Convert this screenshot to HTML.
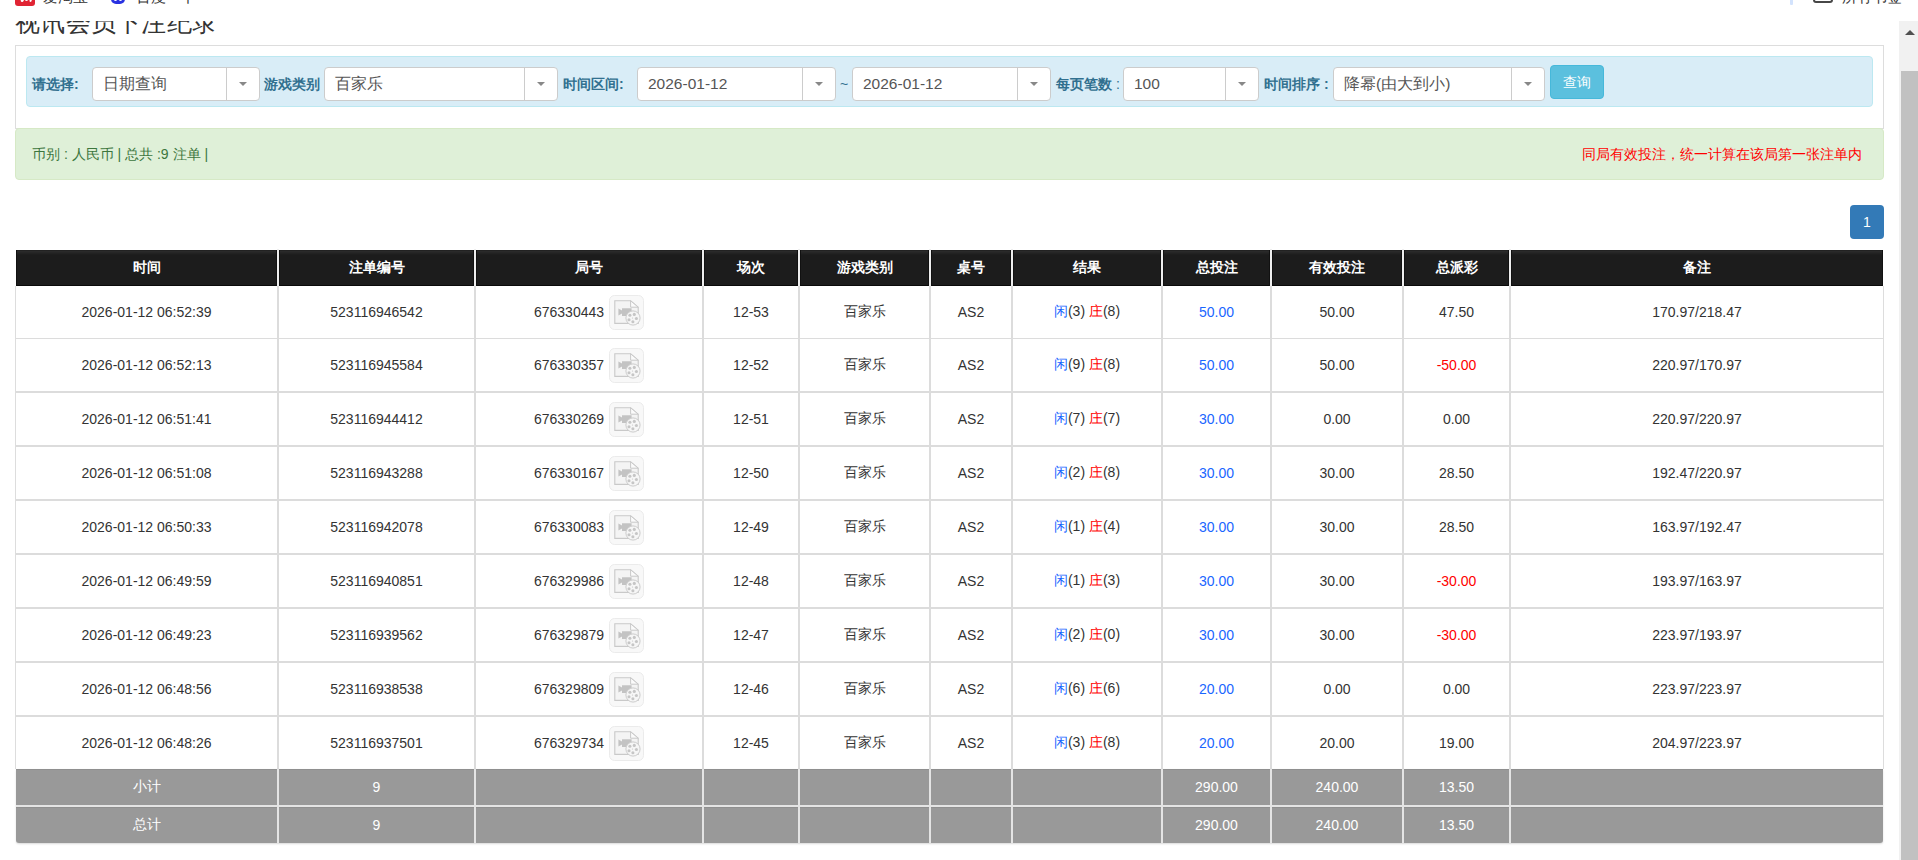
<!DOCTYPE html><html><head><meta charset="utf-8"><style>
html,body{margin:0;padding:0;width:1918px;height:860px;overflow:hidden;background:#fff;font-family:"Liberation Sans", sans-serif;color:#333;}
.a{position:absolute;}
.c{position:absolute;display:flex;align-items:center;justify-content:center;font-size:14px;white-space:nowrap;}
.hd{background:linear-gradient(#1e1e1e 0px,#2a2a2a 1.5px,#1c1c1c 5px);color:#fff;font-weight:bold;box-sizing:border-box;border-left:1px solid #111;border-right:1px solid #111;border-bottom:1px solid #0a0a0a;padding-top:1px;}
.gr{background:#999;color:#fff;box-shadow:inset 0 1px 0 #8f8f8f;}
.sel{position:absolute;background:#fff;border:1px solid #ccc;border-radius:4px;box-sizing:border-box;}
.sel .t{position:absolute;left:10px;top:0;bottom:0;display:flex;align-items:center;font-size:15.5px;color:#555;white-space:nowrap;}
.sel .s{position:absolute;top:0;bottom:0;width:1px;background:#ccc;}
.sel .ar{position:absolute;width:0;height:0;border-left:4px solid transparent;border-right:4px solid transparent;border-top:4px solid #888;}
.lb{position:absolute;font-size:14px;font-weight:bold;color:#31708f;white-space:nowrap;line-height:16px;}
.bl{color:#1a66ff;} .rd{color:#ff0000;}

</style></head><body>
<div class="a" style="left:0;top:0;width:1918px;height:21px;overflow:hidden;background:#fff;">
<div class="a" style="left:15px;top:-14px;width:20px;height:20px;background:#e02433;border-radius:3px;"></div>
<div class="a" style="left:21px;top:-3px;width:3px;height:5px;background:#fff;border-radius:2px;transform:rotate(15deg)"></div>
<div class="a" style="left:25px;top:-2px;width:3px;height:3px;background:#fff;border-radius:2px;"></div>
<div class="a" style="left:30px;top:-3px;width:2px;height:5px;background:#fff;border-radius:2px;transform:rotate(20deg)"></div>
<div class="a" style="left:43px;top:-11px;font-size:15px;color:#333;line-height:16px;white-space:nowrap;">爱淘宝</div>
<div class="a" style="left:111px;top:-12px;width:14px;height:16px;background:#2932e1;border-radius:5px;"></div>
<div class="a" style="left:114px;top:-2px;width:3px;height:3px;background:#fff;border-radius:2px;"></div>
<div class="a" style="left:119px;top:-2px;width:3px;height:3px;background:#fff;border-radius:2px;"></div>
<div class="a" style="left:136px;top:-11px;font-size:15px;color:#333;line-height:16px;white-space:nowrap;">百度一下</div>
<div class="a" style="left:1790px;top:-10px;width:3px;height:15px;background:#d3e3fd;border-radius:1px;"></div>
<div class="a" style="left:1813px;top:-15px;width:16px;height:14px;border:2.5px solid #474747;border-radius:3px;"></div>
<div class="a" style="left:1842px;top:-11px;font-size:15px;color:#333;line-height:16px;white-space:nowrap;">所有书签</div>
</div>
<div class="a" style="left:0;top:21px;width:1899px;height:839px;overflow:hidden;">
<div class="a" style="left:15px;top:-14px;font-size:25px;line-height:30px;letter-spacing:0.3px;color:#333;white-space:nowrap;">视讯会员下注纪录</div>
<div class="a" style="left:15px;top:24px;width:1869px;height:84px;border:1px solid #ddd;box-sizing:border-box;background:#fff;"></div>
<div class="a" style="left:26px;top:35px;width:1847px;height:51px;border:1px solid #bce8f1;box-sizing:border-box;background:#d9edf7;border-radius:4px;"></div>
<div class="lb" style="left:32px;top:55px;">请选择:</div>
<div class="sel" style="left:92px;top:46px;width:168px;height:34px;"><div class="t">日期查询</div><div class="s" style="left:133px"></div><div class="ar" style="left:146px;top:14px"></div></div>
<div class="lb" style="left:264px;top:55px;">游戏类别</div>
<div class="sel" style="left:324px;top:46px;width:234px;height:34px;"><div class="t">百家乐</div><div class="s" style="left:199px"></div><div class="ar" style="left:212px;top:14px"></div></div>
<div class="lb" style="left:563px;top:55px;">时间区间:</div>
<div class="sel" style="left:637px;top:46px;width:199px;height:34px;"><div class="t">2026-01-12</div><div class="s" style="left:164px"></div><div class="ar" style="left:177px;top:14px"></div></div>
<div class="a" style="left:840px;top:55px;font-size:14px;color:#31708f;line-height:16px;">~</div>
<div class="sel" style="left:852px;top:46px;width:199px;height:34px;"><div class="t">2026-01-12</div><div class="s" style="left:164px"></div><div class="ar" style="left:177px;top:14px"></div></div>
<div class="lb" style="left:1056px;top:55px;">每页笔数 <span style='font-weight:normal'>:</span></div>
<div class="sel" style="left:1123px;top:46px;width:136px;height:34px;"><div class="t">100</div><div class="s" style="left:101px"></div><div class="ar" style="left:114px;top:14px"></div></div>
<div class="lb" style="left:1264px;top:55px;">时间排序 :</div>
<div class="sel" style="left:1333px;top:46px;width:212px;height:34px;"><div class="t">降幂(由大到小)</div><div class="s" style="left:177px"></div><div class="ar" style="left:190px;top:14px"></div></div>
<div class="a" style="left:1550px;top:44px;width:54px;height:34px;background:#5bc0de;border:1px solid #46b8da;box-sizing:border-box;border-radius:4px;color:#fff;font-size:14px;display:flex;align-items:center;justify-content:center;padding-top:2px;">查询</div>
<div class="a" style="left:15px;top:107px;width:1869px;height:52px;border:1px solid #d6e9c6;box-sizing:border-box;background:#dff0d8;border-radius:4px;"></div>
<div class="a" style="left:32px;top:125px;font-size:14px;line-height:16px;color:#3c763d;white-space:nowrap;">币别 : 人民币 | 总共 :9 注单 |</div>
<div class="a" style="right:37px;top:125px;font-size:14px;line-height:16px;color:#ff0000;white-space:nowrap;">同局有效投注，统一计算在该局第一张注单内</div>
<div class="a" style="left:1850px;top:184px;width:34px;height:34px;background:#337ab7;border-radius:4px;color:#fff;font-size:14px;display:flex;align-items:center;justify-content:center;">1</div>
<div class="a" style="left:16px;top:229px;width:1867px;height:36px;background:#1c1c1c;border-radius:3px 3px 0 0;"></div>
<div class="c hd" style="left:16px;top:229px;width:261px;height:36px;">时间</div>
<div class="c hd" style="left:279px;top:229px;width:195px;height:36px;">注单编号</div>
<div class="c hd" style="left:476px;top:229px;width:226px;height:36px;">局号</div>
<div class="c hd" style="left:704px;top:229px;width:94px;height:36px;">场次</div>
<div class="c hd" style="left:800px;top:229px;width:129px;height:36px;">游戏类别</div>
<div class="c hd" style="left:931px;top:229px;width:80px;height:36px;">桌号</div>
<div class="c hd" style="left:1013px;top:229px;width:148px;height:36px;">结果</div>
<div class="c hd" style="left:1163px;top:229px;width:107px;height:36px;">总投注</div>
<div class="c hd" style="left:1272px;top:229px;width:130px;height:36px;">有效投注</div>
<div class="c hd" style="left:1404px;top:229px;width:105px;height:36px;">总派彩</div>
<div class="c hd" style="left:1511px;top:229px;width:372px;height:36px;">备注</div>
<div class="a" style="left:277px;top:228px;width:2px;height:37px;background:#eeeeee;"></div>
<div class="a" style="left:474px;top:228px;width:2px;height:37px;background:#eeeeee;"></div>
<div class="a" style="left:702px;top:228px;width:2px;height:37px;background:#eeeeee;"></div>
<div class="a" style="left:798px;top:228px;width:2px;height:37px;background:#eeeeee;"></div>
<div class="a" style="left:929px;top:228px;width:2px;height:37px;background:#eeeeee;"></div>
<div class="a" style="left:1011px;top:228px;width:2px;height:37px;background:#eeeeee;"></div>
<div class="a" style="left:1161px;top:228px;width:2px;height:37px;background:#eeeeee;"></div>
<div class="a" style="left:1270px;top:228px;width:2px;height:37px;background:#eeeeee;"></div>
<div class="a" style="left:1402px;top:228px;width:2px;height:37px;background:#eeeeee;"></div>
<div class="a" style="left:1509px;top:228px;width:2px;height:37px;background:#eeeeee;"></div>
<div class="a" style="left:15px;top:265px;width:1px;height:483px;background:#ddd;"></div>
<div class="a" style="left:1883px;top:265px;width:1px;height:483px;background:#ddd;"></div>
<div class="a" style="left:277px;top:265px;width:2px;height:483px;background:#dcdcdc;"></div>
<div class="a" style="left:474px;top:265px;width:2px;height:483px;background:#dcdcdc;"></div>
<div class="a" style="left:702px;top:265px;width:2px;height:483px;background:#dcdcdc;"></div>
<div class="a" style="left:798px;top:265px;width:2px;height:483px;background:#dcdcdc;"></div>
<div class="a" style="left:929px;top:265px;width:2px;height:483px;background:#dcdcdc;"></div>
<div class="a" style="left:1011px;top:265px;width:2px;height:483px;background:#dcdcdc;"></div>
<div class="a" style="left:1161px;top:265px;width:2px;height:483px;background:#dcdcdc;"></div>
<div class="a" style="left:1270px;top:265px;width:2px;height:483px;background:#dcdcdc;"></div>
<div class="a" style="left:1402px;top:265px;width:2px;height:483px;background:#dcdcdc;"></div>
<div class="a" style="left:1509px;top:265px;width:2px;height:483px;background:#dcdcdc;"></div>
<div class="a" style="left:16px;top:317px;width:1867px;height:1px;background:#dcdcdc;"></div>
<div class="a" style="left:16px;top:370px;width:1867px;height:2px;background:#dcdcdc;"></div>
<div class="a" style="left:16px;top:424px;width:1867px;height:2px;background:#dcdcdc;"></div>
<div class="a" style="left:16px;top:478px;width:1867px;height:2px;background:#dcdcdc;"></div>
<div class="a" style="left:16px;top:532px;width:1867px;height:2px;background:#dcdcdc;"></div>
<div class="a" style="left:16px;top:586px;width:1867px;height:2px;background:#dcdcdc;"></div>
<div class="a" style="left:16px;top:640px;width:1867px;height:2px;background:#dcdcdc;"></div>
<div class="a" style="left:16px;top:694px;width:1867px;height:2px;background:#dcdcdc;"></div>
<div class="c" style="left:16px;top:265px;width:261px;height:52px;"><span>2026-01-12 06:52:39</span></div>
<div class="c" style="left:279px;top:265px;width:195px;height:52px;"><span>523116946542</span></div>
<div class="c" style="left:476px;top:265px;width:226px;height:52px;"><span><span style="position:relative;top:1px">676330443</span><span style="display:inline-block;width:5px"></span><svg width="35" height="35" viewBox="0 0 35 35" style="vertical-align:middle"><rect x="0.5" y="0.5" width="34" height="34" rx="5" fill="#f8f8f8" stroke="#ebebeb"/><path d="M5.8 5.8 H21.6 L29.2 12.2 V28.4 H5.8 Z" fill="#f4f4f4" stroke="#c9c9c9" stroke-width="1.1"/><path d="M21.6 5.8 V12.2 H29.2 Z" fill="#fbfbfb" stroke="#c9c9c9" stroke-width="1"/><path d="M9.4 13.6 L13 15.6 V13.3 H22.6 V20.9 H13 V18.6 L9.4 20.6 Z" fill="#c3c3c3"/><circle cx="24" cy="23" r="7.1" fill="#f6f6f6" stroke="#cdcdcd" stroke-width="1"/><circle cx="20.9" cy="20.3" r="1.55" fill="#c6c6c6"/><circle cx="25.3" cy="19.4" r="1.55" fill="#c6c6c6"/><circle cx="27.4" cy="23.5" r="1.55" fill="#c6c6c6"/><circle cx="23.9" cy="26.8" r="1.55" fill="#c6c6c6"/><circle cx="20" cy="24.8" r="1.55" fill="#c6c6c6"/><circle cx="23.5" cy="23" r="0.6" fill="#c6c6c6"/></svg></span></div>
<div class="c" style="left:704px;top:265px;width:94px;height:52px;"><span>12-53</span></div>
<div class="c" style="left:800px;top:265px;width:129px;height:52px;"><span>百家乐</span></div>
<div class="c" style="left:931px;top:265px;width:80px;height:52px;"><span>AS2</span></div>
<div class="c" style="left:1013px;top:265px;width:148px;height:52px;"><span><span class="bl">闲</span>(3) <span class="rd">庄</span>(8)</span></div>
<div class="c" style="left:1163px;top:265px;width:107px;height:52px;"><span><span class="bl">50.00</span></span></div>
<div class="c" style="left:1272px;top:265px;width:130px;height:52px;"><span>50.00</span></div>
<div class="c" style="left:1404px;top:265px;width:105px;height:52px;"><span>47.50</span></div>
<div class="c" style="left:1511px;top:265px;width:372px;height:52px;"><span>170.97/218.47</span></div>
<div class="c" style="left:16px;top:318px;width:261px;height:52px;"><span>2026-01-12 06:52:13</span></div>
<div class="c" style="left:279px;top:318px;width:195px;height:52px;"><span>523116945584</span></div>
<div class="c" style="left:476px;top:318px;width:226px;height:52px;"><span><span style="position:relative;top:1px">676330357</span><span style="display:inline-block;width:5px"></span><svg width="35" height="35" viewBox="0 0 35 35" style="vertical-align:middle"><rect x="0.5" y="0.5" width="34" height="34" rx="5" fill="#f8f8f8" stroke="#ebebeb"/><path d="M5.8 5.8 H21.6 L29.2 12.2 V28.4 H5.8 Z" fill="#f4f4f4" stroke="#c9c9c9" stroke-width="1.1"/><path d="M21.6 5.8 V12.2 H29.2 Z" fill="#fbfbfb" stroke="#c9c9c9" stroke-width="1"/><path d="M9.4 13.6 L13 15.6 V13.3 H22.6 V20.9 H13 V18.6 L9.4 20.6 Z" fill="#c3c3c3"/><circle cx="24" cy="23" r="7.1" fill="#f6f6f6" stroke="#cdcdcd" stroke-width="1"/><circle cx="20.9" cy="20.3" r="1.55" fill="#c6c6c6"/><circle cx="25.3" cy="19.4" r="1.55" fill="#c6c6c6"/><circle cx="27.4" cy="23.5" r="1.55" fill="#c6c6c6"/><circle cx="23.9" cy="26.8" r="1.55" fill="#c6c6c6"/><circle cx="20" cy="24.8" r="1.55" fill="#c6c6c6"/><circle cx="23.5" cy="23" r="0.6" fill="#c6c6c6"/></svg></span></div>
<div class="c" style="left:704px;top:318px;width:94px;height:52px;"><span>12-52</span></div>
<div class="c" style="left:800px;top:318px;width:129px;height:52px;"><span>百家乐</span></div>
<div class="c" style="left:931px;top:318px;width:80px;height:52px;"><span>AS2</span></div>
<div class="c" style="left:1013px;top:318px;width:148px;height:52px;"><span><span class="bl">闲</span>(9) <span class="rd">庄</span>(8)</span></div>
<div class="c" style="left:1163px;top:318px;width:107px;height:52px;"><span><span class="bl">50.00</span></span></div>
<div class="c" style="left:1272px;top:318px;width:130px;height:52px;"><span>50.00</span></div>
<div class="c" style="left:1404px;top:318px;width:105px;height:52px;"><span><span class="rd">-50.00</span></span></div>
<div class="c" style="left:1511px;top:318px;width:372px;height:52px;"><span>220.97/170.97</span></div>
<div class="c" style="left:16px;top:372px;width:261px;height:52px;"><span>2026-01-12 06:51:41</span></div>
<div class="c" style="left:279px;top:372px;width:195px;height:52px;"><span>523116944412</span></div>
<div class="c" style="left:476px;top:372px;width:226px;height:52px;"><span><span style="position:relative;top:1px">676330269</span><span style="display:inline-block;width:5px"></span><svg width="35" height="35" viewBox="0 0 35 35" style="vertical-align:middle"><rect x="0.5" y="0.5" width="34" height="34" rx="5" fill="#f8f8f8" stroke="#ebebeb"/><path d="M5.8 5.8 H21.6 L29.2 12.2 V28.4 H5.8 Z" fill="#f4f4f4" stroke="#c9c9c9" stroke-width="1.1"/><path d="M21.6 5.8 V12.2 H29.2 Z" fill="#fbfbfb" stroke="#c9c9c9" stroke-width="1"/><path d="M9.4 13.6 L13 15.6 V13.3 H22.6 V20.9 H13 V18.6 L9.4 20.6 Z" fill="#c3c3c3"/><circle cx="24" cy="23" r="7.1" fill="#f6f6f6" stroke="#cdcdcd" stroke-width="1"/><circle cx="20.9" cy="20.3" r="1.55" fill="#c6c6c6"/><circle cx="25.3" cy="19.4" r="1.55" fill="#c6c6c6"/><circle cx="27.4" cy="23.5" r="1.55" fill="#c6c6c6"/><circle cx="23.9" cy="26.8" r="1.55" fill="#c6c6c6"/><circle cx="20" cy="24.8" r="1.55" fill="#c6c6c6"/><circle cx="23.5" cy="23" r="0.6" fill="#c6c6c6"/></svg></span></div>
<div class="c" style="left:704px;top:372px;width:94px;height:52px;"><span>12-51</span></div>
<div class="c" style="left:800px;top:372px;width:129px;height:52px;"><span>百家乐</span></div>
<div class="c" style="left:931px;top:372px;width:80px;height:52px;"><span>AS2</span></div>
<div class="c" style="left:1013px;top:372px;width:148px;height:52px;"><span><span class="bl">闲</span>(7) <span class="rd">庄</span>(7)</span></div>
<div class="c" style="left:1163px;top:372px;width:107px;height:52px;"><span><span class="bl">30.00</span></span></div>
<div class="c" style="left:1272px;top:372px;width:130px;height:52px;"><span>0.00</span></div>
<div class="c" style="left:1404px;top:372px;width:105px;height:52px;"><span>0.00</span></div>
<div class="c" style="left:1511px;top:372px;width:372px;height:52px;"><span>220.97/220.97</span></div>
<div class="c" style="left:16px;top:426px;width:261px;height:52px;"><span>2026-01-12 06:51:08</span></div>
<div class="c" style="left:279px;top:426px;width:195px;height:52px;"><span>523116943288</span></div>
<div class="c" style="left:476px;top:426px;width:226px;height:52px;"><span><span style="position:relative;top:1px">676330167</span><span style="display:inline-block;width:5px"></span><svg width="35" height="35" viewBox="0 0 35 35" style="vertical-align:middle"><rect x="0.5" y="0.5" width="34" height="34" rx="5" fill="#f8f8f8" stroke="#ebebeb"/><path d="M5.8 5.8 H21.6 L29.2 12.2 V28.4 H5.8 Z" fill="#f4f4f4" stroke="#c9c9c9" stroke-width="1.1"/><path d="M21.6 5.8 V12.2 H29.2 Z" fill="#fbfbfb" stroke="#c9c9c9" stroke-width="1"/><path d="M9.4 13.6 L13 15.6 V13.3 H22.6 V20.9 H13 V18.6 L9.4 20.6 Z" fill="#c3c3c3"/><circle cx="24" cy="23" r="7.1" fill="#f6f6f6" stroke="#cdcdcd" stroke-width="1"/><circle cx="20.9" cy="20.3" r="1.55" fill="#c6c6c6"/><circle cx="25.3" cy="19.4" r="1.55" fill="#c6c6c6"/><circle cx="27.4" cy="23.5" r="1.55" fill="#c6c6c6"/><circle cx="23.9" cy="26.8" r="1.55" fill="#c6c6c6"/><circle cx="20" cy="24.8" r="1.55" fill="#c6c6c6"/><circle cx="23.5" cy="23" r="0.6" fill="#c6c6c6"/></svg></span></div>
<div class="c" style="left:704px;top:426px;width:94px;height:52px;"><span>12-50</span></div>
<div class="c" style="left:800px;top:426px;width:129px;height:52px;"><span>百家乐</span></div>
<div class="c" style="left:931px;top:426px;width:80px;height:52px;"><span>AS2</span></div>
<div class="c" style="left:1013px;top:426px;width:148px;height:52px;"><span><span class="bl">闲</span>(2) <span class="rd">庄</span>(8)</span></div>
<div class="c" style="left:1163px;top:426px;width:107px;height:52px;"><span><span class="bl">30.00</span></span></div>
<div class="c" style="left:1272px;top:426px;width:130px;height:52px;"><span>30.00</span></div>
<div class="c" style="left:1404px;top:426px;width:105px;height:52px;"><span>28.50</span></div>
<div class="c" style="left:1511px;top:426px;width:372px;height:52px;"><span>192.47/220.97</span></div>
<div class="c" style="left:16px;top:480px;width:261px;height:52px;"><span>2026-01-12 06:50:33</span></div>
<div class="c" style="left:279px;top:480px;width:195px;height:52px;"><span>523116942078</span></div>
<div class="c" style="left:476px;top:480px;width:226px;height:52px;"><span><span style="position:relative;top:1px">676330083</span><span style="display:inline-block;width:5px"></span><svg width="35" height="35" viewBox="0 0 35 35" style="vertical-align:middle"><rect x="0.5" y="0.5" width="34" height="34" rx="5" fill="#f8f8f8" stroke="#ebebeb"/><path d="M5.8 5.8 H21.6 L29.2 12.2 V28.4 H5.8 Z" fill="#f4f4f4" stroke="#c9c9c9" stroke-width="1.1"/><path d="M21.6 5.8 V12.2 H29.2 Z" fill="#fbfbfb" stroke="#c9c9c9" stroke-width="1"/><path d="M9.4 13.6 L13 15.6 V13.3 H22.6 V20.9 H13 V18.6 L9.4 20.6 Z" fill="#c3c3c3"/><circle cx="24" cy="23" r="7.1" fill="#f6f6f6" stroke="#cdcdcd" stroke-width="1"/><circle cx="20.9" cy="20.3" r="1.55" fill="#c6c6c6"/><circle cx="25.3" cy="19.4" r="1.55" fill="#c6c6c6"/><circle cx="27.4" cy="23.5" r="1.55" fill="#c6c6c6"/><circle cx="23.9" cy="26.8" r="1.55" fill="#c6c6c6"/><circle cx="20" cy="24.8" r="1.55" fill="#c6c6c6"/><circle cx="23.5" cy="23" r="0.6" fill="#c6c6c6"/></svg></span></div>
<div class="c" style="left:704px;top:480px;width:94px;height:52px;"><span>12-49</span></div>
<div class="c" style="left:800px;top:480px;width:129px;height:52px;"><span>百家乐</span></div>
<div class="c" style="left:931px;top:480px;width:80px;height:52px;"><span>AS2</span></div>
<div class="c" style="left:1013px;top:480px;width:148px;height:52px;"><span><span class="bl">闲</span>(1) <span class="rd">庄</span>(4)</span></div>
<div class="c" style="left:1163px;top:480px;width:107px;height:52px;"><span><span class="bl">30.00</span></span></div>
<div class="c" style="left:1272px;top:480px;width:130px;height:52px;"><span>30.00</span></div>
<div class="c" style="left:1404px;top:480px;width:105px;height:52px;"><span>28.50</span></div>
<div class="c" style="left:1511px;top:480px;width:372px;height:52px;"><span>163.97/192.47</span></div>
<div class="c" style="left:16px;top:534px;width:261px;height:52px;"><span>2026-01-12 06:49:59</span></div>
<div class="c" style="left:279px;top:534px;width:195px;height:52px;"><span>523116940851</span></div>
<div class="c" style="left:476px;top:534px;width:226px;height:52px;"><span><span style="position:relative;top:1px">676329986</span><span style="display:inline-block;width:5px"></span><svg width="35" height="35" viewBox="0 0 35 35" style="vertical-align:middle"><rect x="0.5" y="0.5" width="34" height="34" rx="5" fill="#f8f8f8" stroke="#ebebeb"/><path d="M5.8 5.8 H21.6 L29.2 12.2 V28.4 H5.8 Z" fill="#f4f4f4" stroke="#c9c9c9" stroke-width="1.1"/><path d="M21.6 5.8 V12.2 H29.2 Z" fill="#fbfbfb" stroke="#c9c9c9" stroke-width="1"/><path d="M9.4 13.6 L13 15.6 V13.3 H22.6 V20.9 H13 V18.6 L9.4 20.6 Z" fill="#c3c3c3"/><circle cx="24" cy="23" r="7.1" fill="#f6f6f6" stroke="#cdcdcd" stroke-width="1"/><circle cx="20.9" cy="20.3" r="1.55" fill="#c6c6c6"/><circle cx="25.3" cy="19.4" r="1.55" fill="#c6c6c6"/><circle cx="27.4" cy="23.5" r="1.55" fill="#c6c6c6"/><circle cx="23.9" cy="26.8" r="1.55" fill="#c6c6c6"/><circle cx="20" cy="24.8" r="1.55" fill="#c6c6c6"/><circle cx="23.5" cy="23" r="0.6" fill="#c6c6c6"/></svg></span></div>
<div class="c" style="left:704px;top:534px;width:94px;height:52px;"><span>12-48</span></div>
<div class="c" style="left:800px;top:534px;width:129px;height:52px;"><span>百家乐</span></div>
<div class="c" style="left:931px;top:534px;width:80px;height:52px;"><span>AS2</span></div>
<div class="c" style="left:1013px;top:534px;width:148px;height:52px;"><span><span class="bl">闲</span>(1) <span class="rd">庄</span>(3)</span></div>
<div class="c" style="left:1163px;top:534px;width:107px;height:52px;"><span><span class="bl">30.00</span></span></div>
<div class="c" style="left:1272px;top:534px;width:130px;height:52px;"><span>30.00</span></div>
<div class="c" style="left:1404px;top:534px;width:105px;height:52px;"><span><span class="rd">-30.00</span></span></div>
<div class="c" style="left:1511px;top:534px;width:372px;height:52px;"><span>193.97/163.97</span></div>
<div class="c" style="left:16px;top:588px;width:261px;height:52px;"><span>2026-01-12 06:49:23</span></div>
<div class="c" style="left:279px;top:588px;width:195px;height:52px;"><span>523116939562</span></div>
<div class="c" style="left:476px;top:588px;width:226px;height:52px;"><span><span style="position:relative;top:1px">676329879</span><span style="display:inline-block;width:5px"></span><svg width="35" height="35" viewBox="0 0 35 35" style="vertical-align:middle"><rect x="0.5" y="0.5" width="34" height="34" rx="5" fill="#f8f8f8" stroke="#ebebeb"/><path d="M5.8 5.8 H21.6 L29.2 12.2 V28.4 H5.8 Z" fill="#f4f4f4" stroke="#c9c9c9" stroke-width="1.1"/><path d="M21.6 5.8 V12.2 H29.2 Z" fill="#fbfbfb" stroke="#c9c9c9" stroke-width="1"/><path d="M9.4 13.6 L13 15.6 V13.3 H22.6 V20.9 H13 V18.6 L9.4 20.6 Z" fill="#c3c3c3"/><circle cx="24" cy="23" r="7.1" fill="#f6f6f6" stroke="#cdcdcd" stroke-width="1"/><circle cx="20.9" cy="20.3" r="1.55" fill="#c6c6c6"/><circle cx="25.3" cy="19.4" r="1.55" fill="#c6c6c6"/><circle cx="27.4" cy="23.5" r="1.55" fill="#c6c6c6"/><circle cx="23.9" cy="26.8" r="1.55" fill="#c6c6c6"/><circle cx="20" cy="24.8" r="1.55" fill="#c6c6c6"/><circle cx="23.5" cy="23" r="0.6" fill="#c6c6c6"/></svg></span></div>
<div class="c" style="left:704px;top:588px;width:94px;height:52px;"><span>12-47</span></div>
<div class="c" style="left:800px;top:588px;width:129px;height:52px;"><span>百家乐</span></div>
<div class="c" style="left:931px;top:588px;width:80px;height:52px;"><span>AS2</span></div>
<div class="c" style="left:1013px;top:588px;width:148px;height:52px;"><span><span class="bl">闲</span>(2) <span class="rd">庄</span>(0)</span></div>
<div class="c" style="left:1163px;top:588px;width:107px;height:52px;"><span><span class="bl">30.00</span></span></div>
<div class="c" style="left:1272px;top:588px;width:130px;height:52px;"><span>30.00</span></div>
<div class="c" style="left:1404px;top:588px;width:105px;height:52px;"><span><span class="rd">-30.00</span></span></div>
<div class="c" style="left:1511px;top:588px;width:372px;height:52px;"><span>223.97/193.97</span></div>
<div class="c" style="left:16px;top:642px;width:261px;height:52px;"><span>2026-01-12 06:48:56</span></div>
<div class="c" style="left:279px;top:642px;width:195px;height:52px;"><span>523116938538</span></div>
<div class="c" style="left:476px;top:642px;width:226px;height:52px;"><span><span style="position:relative;top:1px">676329809</span><span style="display:inline-block;width:5px"></span><svg width="35" height="35" viewBox="0 0 35 35" style="vertical-align:middle"><rect x="0.5" y="0.5" width="34" height="34" rx="5" fill="#f8f8f8" stroke="#ebebeb"/><path d="M5.8 5.8 H21.6 L29.2 12.2 V28.4 H5.8 Z" fill="#f4f4f4" stroke="#c9c9c9" stroke-width="1.1"/><path d="M21.6 5.8 V12.2 H29.2 Z" fill="#fbfbfb" stroke="#c9c9c9" stroke-width="1"/><path d="M9.4 13.6 L13 15.6 V13.3 H22.6 V20.9 H13 V18.6 L9.4 20.6 Z" fill="#c3c3c3"/><circle cx="24" cy="23" r="7.1" fill="#f6f6f6" stroke="#cdcdcd" stroke-width="1"/><circle cx="20.9" cy="20.3" r="1.55" fill="#c6c6c6"/><circle cx="25.3" cy="19.4" r="1.55" fill="#c6c6c6"/><circle cx="27.4" cy="23.5" r="1.55" fill="#c6c6c6"/><circle cx="23.9" cy="26.8" r="1.55" fill="#c6c6c6"/><circle cx="20" cy="24.8" r="1.55" fill="#c6c6c6"/><circle cx="23.5" cy="23" r="0.6" fill="#c6c6c6"/></svg></span></div>
<div class="c" style="left:704px;top:642px;width:94px;height:52px;"><span>12-46</span></div>
<div class="c" style="left:800px;top:642px;width:129px;height:52px;"><span>百家乐</span></div>
<div class="c" style="left:931px;top:642px;width:80px;height:52px;"><span>AS2</span></div>
<div class="c" style="left:1013px;top:642px;width:148px;height:52px;"><span><span class="bl">闲</span>(6) <span class="rd">庄</span>(6)</span></div>
<div class="c" style="left:1163px;top:642px;width:107px;height:52px;"><span><span class="bl">20.00</span></span></div>
<div class="c" style="left:1272px;top:642px;width:130px;height:52px;"><span>0.00</span></div>
<div class="c" style="left:1404px;top:642px;width:105px;height:52px;"><span>0.00</span></div>
<div class="c" style="left:1511px;top:642px;width:372px;height:52px;"><span>223.97/223.97</span></div>
<div class="c" style="left:16px;top:696px;width:261px;height:52px;"><span>2026-01-12 06:48:26</span></div>
<div class="c" style="left:279px;top:696px;width:195px;height:52px;"><span>523116937501</span></div>
<div class="c" style="left:476px;top:696px;width:226px;height:52px;"><span><span style="position:relative;top:1px">676329734</span><span style="display:inline-block;width:5px"></span><svg width="35" height="35" viewBox="0 0 35 35" style="vertical-align:middle"><rect x="0.5" y="0.5" width="34" height="34" rx="5" fill="#f8f8f8" stroke="#ebebeb"/><path d="M5.8 5.8 H21.6 L29.2 12.2 V28.4 H5.8 Z" fill="#f4f4f4" stroke="#c9c9c9" stroke-width="1.1"/><path d="M21.6 5.8 V12.2 H29.2 Z" fill="#fbfbfb" stroke="#c9c9c9" stroke-width="1"/><path d="M9.4 13.6 L13 15.6 V13.3 H22.6 V20.9 H13 V18.6 L9.4 20.6 Z" fill="#c3c3c3"/><circle cx="24" cy="23" r="7.1" fill="#f6f6f6" stroke="#cdcdcd" stroke-width="1"/><circle cx="20.9" cy="20.3" r="1.55" fill="#c6c6c6"/><circle cx="25.3" cy="19.4" r="1.55" fill="#c6c6c6"/><circle cx="27.4" cy="23.5" r="1.55" fill="#c6c6c6"/><circle cx="23.9" cy="26.8" r="1.55" fill="#c6c6c6"/><circle cx="20" cy="24.8" r="1.55" fill="#c6c6c6"/><circle cx="23.5" cy="23" r="0.6" fill="#c6c6c6"/></svg></span></div>
<div class="c" style="left:704px;top:696px;width:94px;height:52px;"><span>12-45</span></div>
<div class="c" style="left:800px;top:696px;width:129px;height:52px;"><span>百家乐</span></div>
<div class="c" style="left:931px;top:696px;width:80px;height:52px;"><span>AS2</span></div>
<div class="c" style="left:1013px;top:696px;width:148px;height:52px;"><span><span class="bl">闲</span>(3) <span class="rd">庄</span>(8)</span></div>
<div class="c" style="left:1163px;top:696px;width:107px;height:52px;"><span><span class="bl">20.00</span></span></div>
<div class="c" style="left:1272px;top:696px;width:130px;height:52px;"><span>20.00</span></div>
<div class="c" style="left:1404px;top:696px;width:105px;height:52px;"><span>19.00</span></div>
<div class="c" style="left:1511px;top:696px;width:372px;height:52px;"><span>204.97/223.97</span></div>
<div class="a" style="left:16px;top:748px;width:1867px;height:74px;background:#e4e4e4;border-radius:0 0 3px 3px;box-shadow:0 1px 2px rgba(0,0,0,0.15);"></div>
<div class="c gr" style="left:16px;top:748px;width:261px;height:36px;">小计</div>
<div class="c gr" style="left:279px;top:748px;width:195px;height:36px;">9</div>
<div class="c gr" style="left:476px;top:748px;width:226px;height:36px;"></div>
<div class="c gr" style="left:704px;top:748px;width:94px;height:36px;"></div>
<div class="c gr" style="left:800px;top:748px;width:129px;height:36px;"></div>
<div class="c gr" style="left:931px;top:748px;width:80px;height:36px;"></div>
<div class="c gr" style="left:1013px;top:748px;width:148px;height:36px;"></div>
<div class="c gr" style="left:1163px;top:748px;width:107px;height:36px;">290.00</div>
<div class="c gr" style="left:1272px;top:748px;width:130px;height:36px;">240.00</div>
<div class="c gr" style="left:1404px;top:748px;width:105px;height:36px;">13.50</div>
<div class="c gr" style="left:1511px;top:748px;width:372px;height:36px;"></div>
<div class="c gr" style="left:16px;top:786px;width:261px;height:36px;border-bottom-left-radius:3px;">总计</div>
<div class="c gr" style="left:279px;top:786px;width:195px;height:36px;">9</div>
<div class="c gr" style="left:476px;top:786px;width:226px;height:36px;"></div>
<div class="c gr" style="left:704px;top:786px;width:94px;height:36px;"></div>
<div class="c gr" style="left:800px;top:786px;width:129px;height:36px;"></div>
<div class="c gr" style="left:931px;top:786px;width:80px;height:36px;"></div>
<div class="c gr" style="left:1013px;top:786px;width:148px;height:36px;"></div>
<div class="c gr" style="left:1163px;top:786px;width:107px;height:36px;">290.00</div>
<div class="c gr" style="left:1272px;top:786px;width:130px;height:36px;">240.00</div>
<div class="c gr" style="left:1404px;top:786px;width:105px;height:36px;">13.50</div>
<div class="c gr" style="left:1511px;top:786px;width:372px;height:36px;border-bottom-right-radius:3px;"></div>
</div>
<div class="a" style="left:1899px;top:21px;width:19px;height:839px;background:#f1f1f1;"></div>
<div class="a" style="left:1901px;top:71px;width:17px;height:789px;background:#c1c1c1;"></div>
<div class="a" style="left:1905px;top:30px;width:0;height:0;border-left:5px solid transparent;border-right:5px solid transparent;border-bottom:5px solid #505050;"></div>
</body></html>
